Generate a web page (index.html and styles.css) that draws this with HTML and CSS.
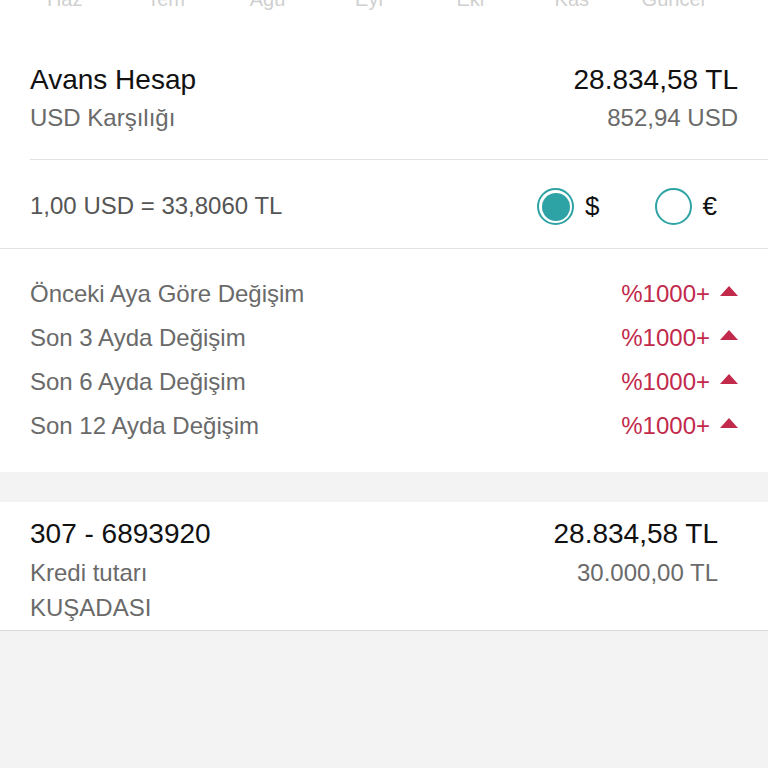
FILE: index.html
```html
<!DOCTYPE html>
<html lang="tr">
<head>
    <meta charset="UTF-8">
    <meta name="viewport" content="width=device-width, initial-scale=1.0">
    <title>Avans Hesap</title>
    <link rel="stylesheet" href="styles.css">
</head>
<body>
    <!-- Month axis of the chart above (scrolled out of view) -->
    <div class="month-strip">
        <div class="month-row">
            <span>Haz</span>
            <span>Tem</span>
            <span>Ağu</span>
            <span>Eyl</span>
            <span>Eki</span>
            <span>Kas</span>
            <span>Güncel</span>
        </div>
    </div>

    <section class="summary">
        <div class="account-row">
            <div>
                <div class="title">Avans Hesap</div>
                <div class="sub">USD Karşılığı</div>
            </div>
            <div class="amounts">
                <div class="title">28.834,58 TL</div>
                <div class="sub">852,94 USD</div>
            </div>
        </div>

        <div class="rate-row">
            <span class="rate">1,00 USD = 33,8060 TL</span>
            <div class="currency-switch">
                <label class="currency-option">
                    <span class="radio checked"></span>
                    <span class="symbol">$</span>
                </label>
                <label class="currency-option">
                    <span class="radio"></span>
                    <span class="symbol">€</span>
                </label>
            </div>
        </div>
    </section>

    <section class="changes">
        <div class="change-row">
            <span>Önceki Aya Göre Değişim</span>
            <span class="change-value">%1000+ <i class="arrow-up"></i></span>
        </div>
        <div class="change-row">
            <span>Son 3 Ayda Değişim</span>
            <span class="change-value">%1000+ <i class="arrow-up"></i></span>
        </div>
        <div class="change-row">
            <span>Son 6 Ayda Değişim</span>
            <span class="change-value">%1000+ <i class="arrow-up"></i></span>
        </div>
        <div class="change-row">
            <span>Son 12 Ayda Değişim</span>
            <span class="change-value">%1000+ <i class="arrow-up"></i></span>
        </div>
    </section>

    <div class="loan-card">
        <div class="loan-row">
            <div>
                <div class="title">307 - 6893920</div>
                <div class="sub first">Kredi tutarı</div>
                <div class="sub">KUŞADASI</div>
            </div>
            <div class="amounts">
                <div class="title">28.834,58 TL</div>
                <div class="sub first">30.000,00 TL</div>
            </div>
        </div>
    </div>
</body>
</html>
```

FILE: styles.css
```css
:root {
    --text: #111;
    --muted: #6a6a6a;
    --red: #c22a4c;
    --teal: #2ea3a5;
    --line: #e2e2e2;
    --background: #f3f3f3;
}

* {
    box-sizing: border-box;
    margin: 0;
    padding: 0;
}

html, body {
    background: var(--background);
    font-family: 'Liberation Sans', Arial, sans-serif;
    color: var(--text);
}

.month-strip {
    background: white;
    height: 12px;
    overflow: hidden;
}

.month-row {
    display: grid;
    grid-template-columns: repeat(7, 1fr);
    justify-items: center;
    padding: 0 44px 0 14px;
    margin-top: -13px;
    font-size: 20px;
    line-height: 24px;
    color: #d0d0d0;
}

.summary {
    background: white;
    padding: 50px 0 0 30px;
    border-bottom: 1px solid var(--line);
}

.title {
    font-size: 28px;
    line-height: 36px;
}

.sub {
    font-size: 24px;
    line-height: 36px;
    color: var(--muted);
}

.account-row {
    display: flex;
    justify-content: space-between;
    padding: 0 30px 23px 0;
    border-bottom: 1px solid var(--line);
}

.account-row .sub {
    margin-top: 2px;
}

.amounts {
    text-align: right;
}

.rate-row {
    display: flex;
    justify-content: space-between;
    align-items: center;
    height: 88px;
    padding: 4px 51px 0 0;
}

.rate {
    font-size: 24px;
    color: #555;
}

.currency-switch {
    display: flex;
    gap: 55px;
}

.currency-option {
    display: flex;
    align-items: center;
    gap: 11px;
    font-size: 26px;
}

.radio {
    width: 37px;
    height: 37px;
    border-radius: 50%;
    border: 2.5px solid var(--teal);
    background: white;
}

.radio.checked {
    padding: 2.5px;
    background: var(--teal);
    background-clip: content-box;
}

.changes {
    background: white;
    padding: 23px 30px 24px;
    margin-bottom: 30px;
}

.change-row {
    display: flex;
    justify-content: space-between;
    font-size: 24px;
    line-height: 44px;
    color: var(--muted);
}

.change-value {
    display: flex;
    align-items: center;
    gap: 10px;
    color: var(--red);
}

.arrow-up {
    width: 0;
    height: 0;
    border-left: 9.5px solid transparent;
    border-right: 9.5px solid transparent;
    border-bottom: 10px solid var(--red);
    margin-top: -6px;
}

.loan-card {
    background: white;
    padding: 14px 50px 5px 30px;
    border-bottom: 1px solid #dcdcdc;
}

.loan-row {
    display: flex;
    justify-content: space-between;
}

.loan-row .sub {
    line-height: 35px;
}

.loan-row .sub.first {
    margin-top: 3px;
}
```
